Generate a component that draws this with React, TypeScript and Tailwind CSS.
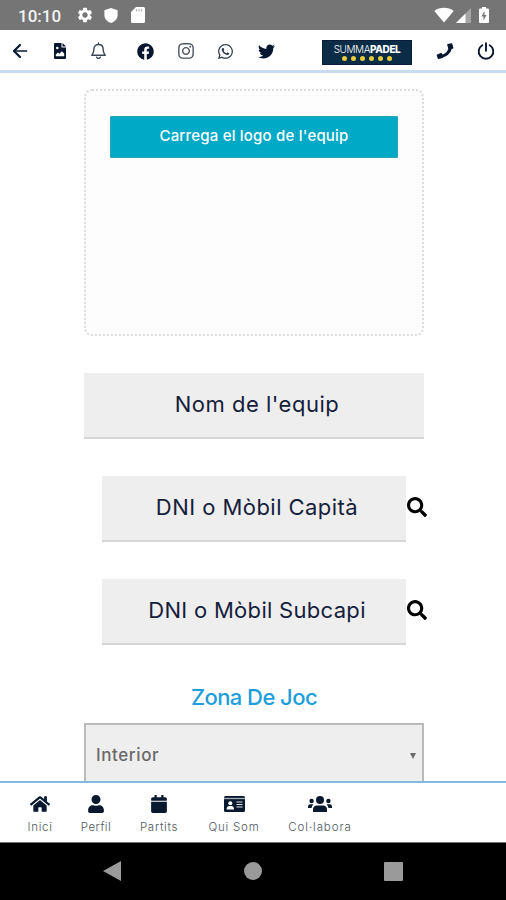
import type { ReactNode } from 'react';
import {
  FaCalendar,
  FaFacebook,
  FaHome,
  FaInstagram,
  FaSearch,
  FaTwitter,
  FaUser,
  FaWhatsapp,
} from 'react-icons/fa';
import { MdSettings } from 'react-icons/md';

type IconProps = { className?: string };

function ArrowIcon({ className }: IconProps) {
  return (
    <svg viewBox="0 0 16 16" className={className} fill="none" stroke="currentColor" strokeLinecap="round" strokeLinejoin="round">
      <path d="M2 8H14.500" strokeWidth="1.700" />
      <path d="M8 2 2 8 8 14" strokeWidth="2.200" />
    </svg>
  );
}

function PhotoFileIcon({ className }: IconProps) {
  return (
    <svg viewBox="0 0 12 16" className={className} fill="currentColor">
      <path d="M1 0H7.500V4.500H12V15Q12 16 11 16H1Q0 16 0 15V1Q0 0 1 0ZM8.500 0 12 3.500H8.500Z" />
      <circle cx="3.300" cy="5" r="1.300" fill="#fff" />
      <path d="M1.800 13.300V11.500L4 9.500 5.300 10.800 7.800 8.200 10.200 10.600V13.300Z" fill="#fff" />
    </svg>
  );
}

function BellIcon({ className }: IconProps) {
  return (
    <svg viewBox="0 0 16 18" className={className} fill="none" stroke="currentColor" strokeWidth="1.400" strokeLinecap="round" strokeLinejoin="round">
      <path d="M8 1V2.300M3.400 7C3.400 4.300 5.300 2.500 8 2.500S12.600 4.300 12.600 7C12.600 10.700 13.500 11.500 14.700 13.300H1.300C2.500 11.500 3.400 10.700 3.400 7Z" />
      <path d="M6.200 15.200A1.900 1.700 0 0 0 9.800 15.200" />
    </svg>
  );
}

// Slim handset, earpiece top right
function PhoneIcon({ className }: IconProps) {
  return (
    <svg viewBox="0 0 18 18" className={className} fill="none" stroke="currentColor" strokeLinejoin="round">
      <path d="M14.300 4.500C14.500 9.500 10 14.200 4 14.200" strokeWidth="3" />
      <path d="M12 2.800 15.500 2 16.600 6 13 6.300Z" strokeWidth="1.600" fill="currentColor" />
      <path d="M1.500 13.300 5.200 11.800 6.300 15.200 2.500 16.200Z" strokeWidth="1.600" fill="currentColor" />
    </svg>
  );
}

function PowerIcon({ className }: IconProps) {
  return (
    <svg viewBox="0 0 18 18" className={className} fill="none" stroke="currentColor" strokeWidth="1.900" strokeLinecap="round">
      <path d="M5.300 3.200A7.300 7.300 0 1 0 12.700 3.200M9 1.200V8.800" />
    </svg>
  );
}

function CardIcon({ className }: IconProps) {
  return (
    <svg viewBox="0 0 21 16" className={className} fill="currentColor">
      <rect width="21" height="16" rx="1.500" />
      <path d="M0 2.500H21" stroke="#a7adb5" strokeWidth="1.300" />
      <circle cx="6.300" cy="7.300" r="2" fill="#fff" />
      <path d="M2.700 13.500V12.500Q2.700 10 5 10H7.600Q10 10 10 12.500V13.500Z" fill="#fff" />
      <path d="M12.500 6H18.500M12.500 8.500H18.500M12.500 11H18.500" stroke="#dfe3e8" strokeWidth="1.200" />
    </svg>
  );
}

function GroupIcon({ className }: IconProps) {
  return (
    <svg viewBox="0 0 24 16" className={className} fill="currentColor">
      <circle cx="12" cy="4" r="4" />
      <path d="M5 16V14Q5 9.500 9 9.500H15Q19 9.500 19 14V16Z" />
      <circle cx="3.600" cy="5" r="2.200" />
      <circle cx="20.400" cy="5" r="2.200" />
      <path d="M0 12V10.500Q0 8.300 2.300 8.300H5.500Q3.800 9.800 3.500 12ZM24 12V10.500Q24 8.300 21.700 8.300H18.500Q20.200 9.800 20.500 12Z" />
    </svg>
  );
}

function StatusBar() {
  return (
    <div className="flex h-[30px] shrink-0 items-center bg-[#757575] pl-[18px] pr-[16px] text-white">
      <span className="mt-[3px] w-[58px] font-[Roboto] text-[17px] font-medium leading-none text-[#f4f4f4]">10:10</span>
      <MdSettings className="h-[18px] w-[18px]" />
      <svg viewBox="0 0 16 18" className="ml-[9px] h-[17px] w-[16px]" fill="currentColor">
        <path d="M8 1 15 3.500V8.500C15 12.500 12 15.800 8 17 4 15.800 1 12.500 1 8.500V3.500Z" />
      </svg>
      <svg viewBox="0 0 14 16" className="ml-[12px] h-[16px] w-[14px]" fill="currentColor">
        <path d="M5 0H12.500Q14 0 14 1.500V14.500Q14 16 12.500 16H1.500Q0 16 0 14.500V5Z" />
        <path d="M5 2H6.200V4.500H5ZM7.500 2H8.700V4.500H7.500ZM10 2H11.200V4.500H10Z" fill="#bbb" />
      </svg>
      <svg viewBox="0 0 20 16" className="ml-auto h-[16px] w-[20px]" fill="currentColor">
        <path d="M10 15.500.3 4Q4.500.8 10 .8T19.700 4Z" />
      </svg>
      <svg viewBox="0 0 15 15" className="ml-[2px] mt-[1px] h-[15px] w-[15px]" fill="currentColor">
        <path d="M0 15 15 0V15Z" opacity=".35" />
        <path d="M0 15 9.500 5.500V15Z" />
      </svg>
      <svg viewBox="0 0 10 16" className="ml-[8px] mr-[1px] h-[16px] w-[10px]" fill="currentColor">
        <path d="M3 0H7V1.500H9Q10 1.500 10 2.500V15Q10 16 9 16H1Q0 16 0 15V2.500Q0 1.500 1 1.500H3Z" />
        <path d="M5.500 4 2.500 9.500H4.500V13.500L7.500 8H5.500Z" fill="#757575" />
      </svg>
    </div>
  );
}

function Logo() {
  return (
    <div className="ml-[47px] mt-[2px] flex h-[25px] w-[90px] flex-col items-center border border-[#0a1c3c] bg-[#0a2c47]">
      <div className="mt-[2px] whitespace-nowrap text-[10px] leading-[12px] tracking-[-0.4px] text-white">
        <span className="font-light">SUMMA</span>
        <span className="font-extrabold">PADEL</span>
      </div>
      <div className="mt-[1px] flex gap-[4px]">
        {[0, 1, 2, 3, 4, 5].map(i => (
          <span key={i} className="h-[5px] w-[5px] rounded-full bg-[#e8cc3c]" />
        ))}
      </div>
    </div>
  );
}

function Header() {
  return (
    <header className="flex h-[43px] shrink-0 items-center border-b-[3px] border-[#c8dcef] bg-white pl-[12px] pt-[2px] text-[#08172f]">
      <ArrowIcon className="h-[16px] w-[16px]" />
      <PhotoFileIcon className="ml-[26px] h-[16px] w-[12px]" />
      <BellIcon className="ml-[24px] h-[18px] w-[17px] text-[#3a4453]" />
      <FaFacebook className="ml-[30px] h-[17px] w-[17px]" />
      <FaInstagram className="ml-[23px] h-[18px] w-[18px] text-[#4c5360]" />
      <FaWhatsapp className="ml-[22px] h-[17px] w-[17px] text-[#2f3848]" />
      <FaTwitter className="ml-[24px] h-[17px] w-[17px]" />
      <Logo />
      <PhoneIcon className="ml-[24px] h-[18px] w-[18px]" />
      <PowerIcon className="ml-[23px] h-[18px] w-[18px]" />
    </header>
  );
}

function Field({ className, children }: { className: string; children: ReactNode }) {
  return (
    <div className={`flex h-[66px] items-center justify-center whitespace-nowrap border-b-2 border-[#d6d6d6] bg-[#eee] pb-[2px] text-[#15203a] ${className}`}>
      {children}
    </div>
  );
}

const tabs = [
  { label: 'Inici', icon: FaHome, slot: 'ml-[20px] w-[40px]', text: 'tracking-[0.7px]', size: 'h-[20px] w-[20px]' },
  { label: 'Perfil', icon: FaUser, slot: 'ml-[16px] w-[40px]', text: 'tracking-[0.5px]', size: 'h-[18px] w-[18px]' },
  { label: 'Partits', icon: FaCalendar, slot: 'ml-[18px] w-[50px]', text: 'tracking-[0.7px]', size: 'h-[18px] w-[18px]' },
  { label: 'Qui Som', icon: CardIcon, slot: 'ml-[20px] w-[60px]', text: 'tracking-[0.8px]', size: 'h-[16px] w-[21px]' },
  { label: 'Col·labora', icon: GroupIcon, slot: 'ml-[21px] w-[70px]', text: 'tracking-[0.9px]', size: 'h-[16px] w-[24px]' },
];

function TabBar() {
  return (
    <nav className="flex h-[62px] shrink-0 border-b border-t-2 border-b-[#777] border-t-[#82b9df] bg-white">
      {tabs.map(({ label, icon: Icon, slot, text, size }) => (
        <div key={label} className={`flex flex-col items-center ${slot}`}>
          <div className="mt-[10px] flex h-[22px] items-center text-[#08182f]">
            <Icon className={size} />
          </div>
          <span className={`mt-[4px] whitespace-nowrap text-[11.5px] font-light leading-[16px] text-[#4f5862] ${text}`}>{label}</span>
        </div>
      ))}
    </nav>
  );
}

function AndroidNav() {
  return (
    <div className="flex h-[57px] shrink-0 items-center bg-black pl-[103px] text-[#9a9a9a]">
      <svg viewBox="0 0 18 20" className="mb-[1px] h-[20px] w-[18px]" fill="currentColor">
        <path d="M18 0V20L0 10Z" />
      </svg>
      <span className="mb-[1px] ml-[123px] h-[18px] w-[18px] rounded-full bg-[#9a9a9a]" />
      <span className="ml-[122px] h-[19px] w-[19px] rounded-[1px] bg-[#9a9a9a]" />
    </div>
  );
}

function App() {
  return (
    <div className="flex h-[900px] w-[506px] flex-col overflow-hidden bg-white font-[Inter,sans-serif]">
      <StatusBar />
      <Header />
      <main className="flex min-h-0 flex-1 flex-col overflow-hidden pl-[84px]">
        <div className="mt-[16px] h-[247px] w-[340px] shrink-0 rounded-[8px] border-2 border-dotted border-[#dcdcdc] bg-[#fdfdfd] pl-[24px] pt-[25px]">
          <button className="flex h-[42px] w-[288px] items-center justify-center whitespace-nowrap rounded-[1px] border border-[#2da3b8] bg-[#00a9c6] pb-[2px] text-[15px] font-medium tracking-[0.2px] text-white">
            Carrega el logo de l'equip
          </button>
        </div>

        <Field className="mt-[37px] w-[340px] shrink-0 pl-[6px] text-[22px] tracking-[0.5px]">Nom de l'equip</Field>

        <div className="mt-[37px] flex shrink-0 items-center pl-[18px]">
          <Field className="w-[304px] pl-[6px] text-[22px] tracking-[0.45px]">DNI o Mòbil Capità</Field>
          <FaSearch className="mb-[4px] ml-[1px] h-[20px] w-[20px] text-black" />
        </div>

        <div className="mt-[37px] flex shrink-0 items-center pl-[18px]">
          <Field className="w-[304px] pl-[6px] text-[22px] tracking-[0.3px]">DNI o Mòbil Subcapi</Field>
          <FaSearch className="mb-[4px] ml-[1px] h-[20px] w-[20px] text-black" />
        </div>

        <h2 className="mt-[37px] w-[340px] shrink-0 text-center text-[22px] font-medium leading-[30px] tracking-[-0.55px] text-[#209ddb]">
          Zona De Joc
        </h2>

        <div className="mt-[11px] flex h-[67px] w-[340px] shrink-0 items-center justify-between border-2 border-[#bababa] bg-[#eee] pb-[1px] pl-[10px] pr-[6px] text-[#696969]">
          <span className="text-[17px] font-medium tracking-[0.6px]">Interior</span>
          <svg viewBox="0 0 6 6" className="h-[6px] w-[6px]" fill="currentColor">
            <path d="M0 0H6L3 6Z" />
          </svg>
        </div>
      </main>
      <TabBar />
      <AndroidNav />
    </div>
  );
}

export default App;
